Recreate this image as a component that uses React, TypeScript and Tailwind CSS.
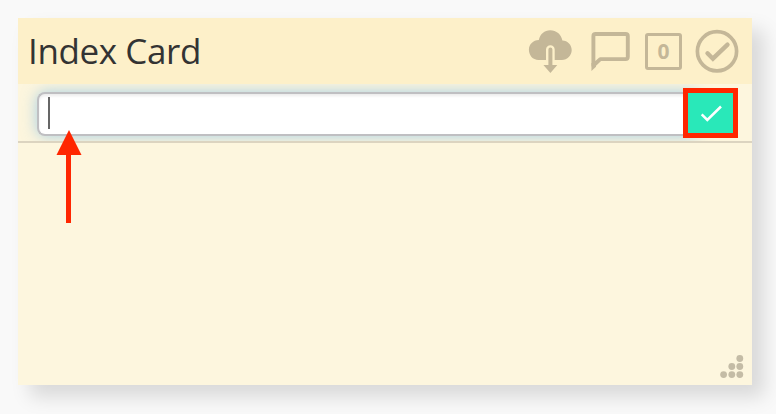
function CloudDownload() {
  return (
    <svg className="h-11 w-11" viewBox="0 0 44 44" fill="#c4b798">
      <path d="M10.5 31C4.700 31 .9 26.200 .9 20.800 .9 15.500 5.200 11.300 10.800 11.100 12 5 16.500 1.200 22.200 1.200c6.300 0 10.900 4.200 12.200 10.200 5.300.2 9.300 4.400 9.300 9.700 0 5.500-4.300 9.900-9.900 9.900H26.700V20.600c0-2.600-1.900-4.400-4.300-4.400s-4.400 1.800-4.400 4.400V31Z" />
      <path d="M20.400 20.500a2 2 0 0 1 4 0V36h4.900l-6.900 7.900-7-7.900h5Z" />
    </svg>
  )
}

function Comment() {
  return (
    <svg className="ml-[19px] h-11 w-10" viewBox="0 0 40 44" fill="none">
      <path
        d="M2.400 36.500V7.200Q2.400 5 4.700 5H34.500Q36.800 5 36.800 7.200V27.800Q36.800 30.100 34.500 30.100H9.300Z"
        stroke="#c4b798"
        strokeWidth="3.900"
        strokeLinejoin="round"
      />
      <path d="M.45 34V42L5 37.800V34Z" fill="#c4b798" />
    </svg>
  )
}

function CheckCircle() {
  return (
    <svg className="ml-[13px] h-11 w-11" viewBox="0 0 44 44" fill="none" stroke="#c4b798">
      <circle cx="22" cy="22.300" r="19.600" strokeWidth="3.700" />
      <path d="M12.500 24.300L17.900 29.700L32.500 15.700" strokeWidth="4.400" strokeLinecap="round" />
    </svg>
  )
}

function ResizeGrip() {
  return (
    <svg className="h-6 w-6" viewBox="0 0 24 24" fill="#c4bca6">
      <circle cx="19.800" cy="4.500" r="3.400" />
      <circle cx="11.800" cy="12.500" r="3.400" />
      <circle cx="19.800" cy="12.500" r="3.400" />
      <circle cx="3.600" cy="20.600" r="3.400" />
      <circle cx="11.800" cy="20.600" r="3.400" />
      <circle cx="19.800" cy="20.600" r="3.400" />
    </svg>
  )
}

export default function App() {
  return (
    <div className="h-[414px] w-[776px] overflow-hidden bg-[#f9f9f9] p-[18px] font-['Open_Sans',sans-serif]">
      <div className="relative flex h-[367px] w-[734px] flex-col bg-[#fdf6de] shadow-[12px_12px_18px_rgba(0,0,0,0.13)]">
        <header className="flex h-[66px] shrink-0 items-center justify-between bg-[#fdf0c9] pl-[10px] pr-[13px]">
          <h1 className="pb-[2px] text-[35px] leading-none tracking-[-0.4px] text-[#333333]">Index Card</h1>
          <div className="flex items-center">
            <CloudDownload />
            <Comment />
            <div className="ml-[14px] mt-px flex h-[37px] w-[37px] items-center justify-center rounded-[3px] border-3 border-[#c4b798] pb-px text-[21px] font-bold leading-none text-[#c4b798]">
              0
            </div>
            <CheckCircle />
          </div>
        </header>

        <div className="h-[59px] shrink-0 overflow-hidden border-b-2 border-[#dcd4c0] pl-[19px] pt-[8px]">
          <div className="flex h-[44px] w-[660px] items-center rounded-l-[8px] border-2 border-r-0 border-[#bfbfc2] bg-white pl-[9px] shadow-[0_0_15px_rgba(82,168,236,0.5),inset_0_2px_3px_rgba(0,0,0,0.08)]">
            <span className="-mt-[2px] h-8 w-[2px] bg-[#666666]" />
          </div>
        </div>

        <div className="mt-auto flex justify-end pb-[7px] pr-[8px]">
          <ResizeGrip />
        </div>

        {/* save button with its highlight frame */}
        <button
          aria-label="Save"
          className="absolute left-[665px] top-[70px] flex h-[50px] w-[55px] items-center justify-center border-[5px] border-[#ff2600] bg-[#29e8b9]"
        >
          <svg className="mt-px h-6 w-6" viewBox="0 0 24 24" fill="none" stroke="white" strokeWidth="2.500">
            <path d="M2.700 12.400L8.300 18L22 4.500" />
          </svg>
        </button>

        {/* pointer to the text field */}
        <svg className="absolute left-[38px] top-[112px] h-[93px] w-[26px]" viewBox="0 0 26 93" fill="#ff2600">
          <path d="M13 0L25.500 25H15V93H10V25H.5Z" />
        </svg>
      </div>
    </div>
  )
}
